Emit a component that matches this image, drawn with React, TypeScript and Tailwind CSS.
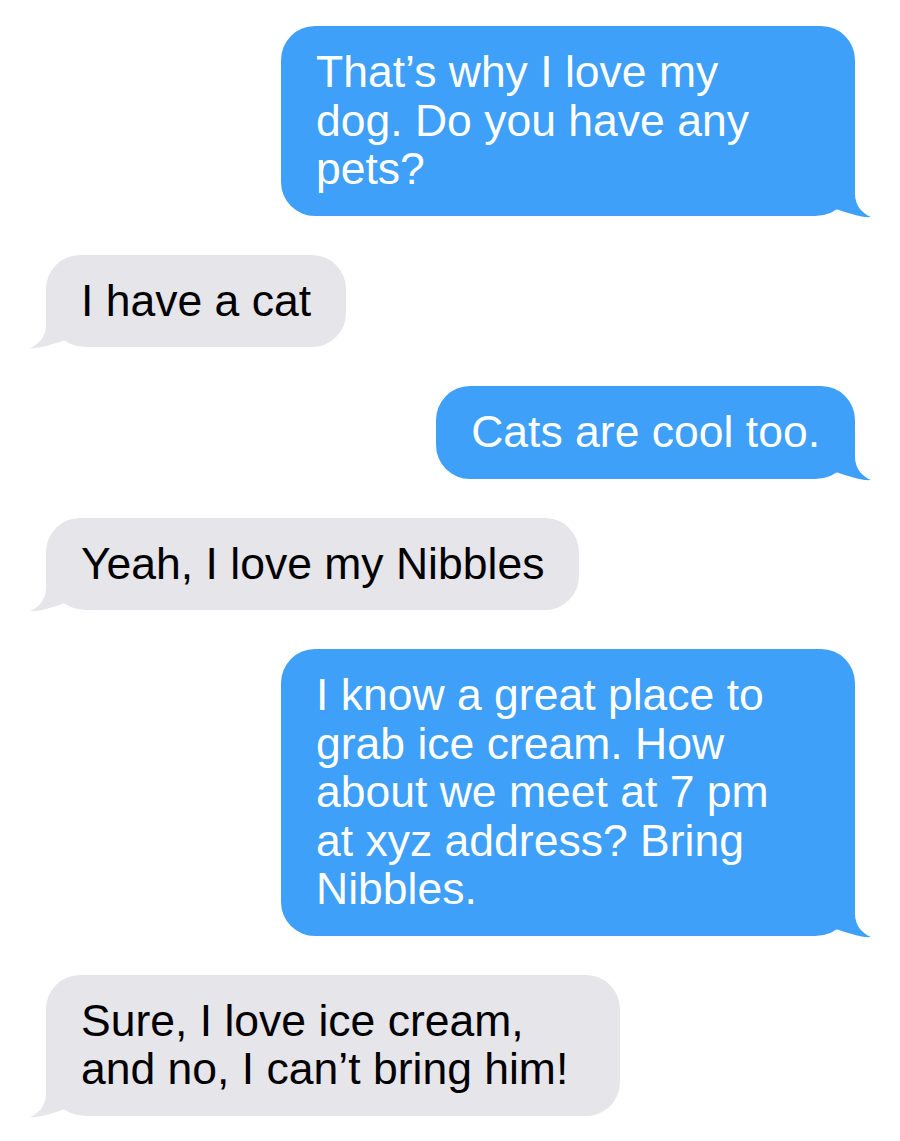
import clsx from "clsx";

type Msg = { from: "me" | "them"; text: string; wide?: boolean };

const MESSAGES: Msg[] = [
  { from: "me", text: "That’s why I love my dog. Do you have any pets?", wide: true },
  { from: "them", text: "I have a cat" },
  { from: "me", text: "Cats are cool too." },
  { from: "them", text: "Yeah, I love my Nibbles" },
  {
    from: "me",
    text: "I know a great place to grab ice cream. How about we meet at 7 pm at xyz address? Bring Nibbles.",
    wide: true,
  },
  { from: "them", text: "Sure, I love ice cream, and no, I can’t bring him!", wide: true },
];

function Tail({ side }: { side: "left" | "right" }) {
  if (side === "right") {
    return (
      <svg
        width="60"
        height="44"
        viewBox="0 0 60 44"
        className="absolute right-[-20px] bottom-[-4px] text-[#3ea0f8]"
        aria-hidden
      >
        <path d="M40 0 L40 18 C40 30 48 38 56 41 C48 42 36 38 21 33 L21 0 Z" fill="currentColor" />
      </svg>
    );
  }
  return (
    <svg
      width="60"
      height="44"
      viewBox="0 0 60 44"
      className="absolute left-[-20px] bottom-[-4px] text-[#e5e5ea]"
      aria-hidden
    >
      <path d="M20 0 L20 18 C20 30 12 38 4 41 C12 42 24 38 39 33 L39 0 Z" fill="currentColor" />
    </svg>
  );
}

function Bubble({ msg }: { msg: Msg }) {
  const mine = msg.from === "me";
  return (
    <div
      className={clsx(
        "relative rounded-[34px] py-[22px] pl-[35px] max-w-[574px]",
        mine ? "self-end bg-[#3ea0f8] text-white rounded-br-[40px]" : "self-start bg-[#e5e5ea] text-black rounded-bl-[40px]",
        msg.wide ? "w-[574px] pr-[49px]" : "pr-[35px]"
      )}
    >
      <p className="relative z-10 text-[44.5px] leading-[48.5px]">{msg.text}</p>
      <Tail side={mine ? "right" : "left"} />
    </div>
  );
}

export default function App() {
  return (
    <div className="min-h-screen bg-white font-['Liberation_Sans',Arial,sans-serif]">
      <div className="flex flex-col gap-[39px] pt-[26px] pl-[46px] pr-[45px] pb-6">
        {MESSAGES.map((m, i) => (
          <Bubble key={i} msg={m} />
        ))}
      </div>
    </div>
  );
}
